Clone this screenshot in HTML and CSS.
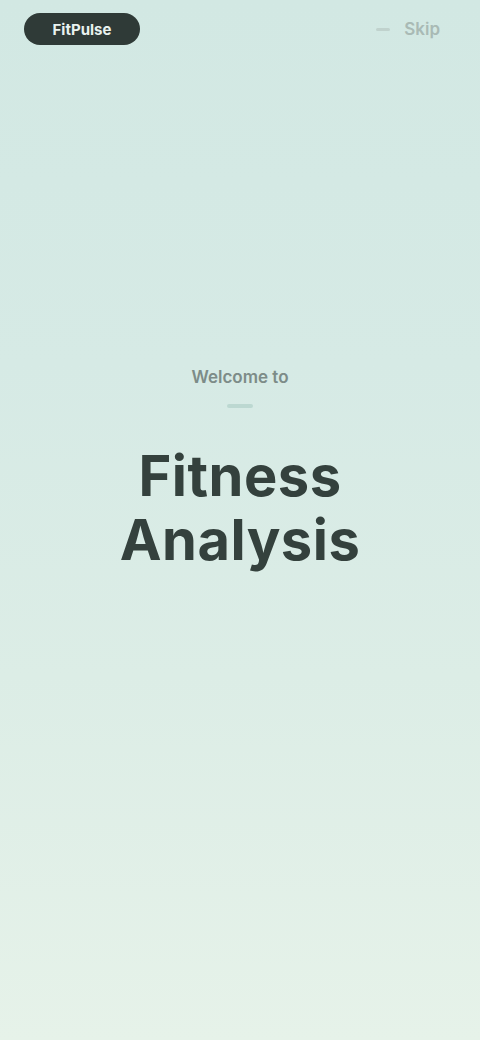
FILE: index.html
```html
<!DOCTYPE html>
<html lang="en">
<head>
<meta charset="utf-8">
<title>Fitness Analysis</title>
<link rel="stylesheet" href="styles.css">
</head>
<body>
<div class="screen">
  <header class="topbar">
    <div class="brand-pill">FitPulse</div>
    <div class="skip"><span class="skip-dot"></span>Skip</div>
  </header>
  <main class="hero">
    <div class="step">Welcome to</div>
    <div class="step-bar"></div>
    <h1 class="title">Fitness<br>Analysis</h1>
  </main>
</div>
</body>
</html>
```
FILE: styles.css
```css
* { box-sizing: border-box; }
html, body { margin: 0; padding: 0; }
body {
  font-family: Inter, "Noto Sans", "Liberation Sans", sans-serif;
  width: 480px;
  height: 1040px;
  overflow: hidden;
}
.screen {
  width: 480px;
  height: 1040px;
  background: linear-gradient(180deg, #d2e8e3 0%, #d6eae5 35%, #dcede6 65%, #e6f2e9 100%);
  display: flex;
  flex-direction: column;
}
.topbar {
  display: flex;
  justify-content: space-between;
  align-items: center;
  padding: 12px 40px 0 24px;
  height: 46px;
}
.brand-pill {
  width: 116px;
  height: 32px;
  border-radius: 16px;
  background: #2f3a37;
  color: #e9f2ef;
  font-size: 15px;
  font-weight: 700;
  display: flex;
  align-items: center;
  justify-content: center;
}
.skip {
  display: flex;
  align-items: center;
  gap: 14px;
  color: #a9bab5;
  font-size: 17px;
  font-weight: 600;
}
.skip-dot {
  width: 14px;
  height: 3px;
  border-radius: 2px;
  background: #c0d2cd;
}
.hero {
  display: flex;
  flex-direction: column;
  align-items: center;
  padding-top: 316px;
}
.step {
  font-size: 17px;
  font-weight: 600;
  color: #7d8c88;
  line-height: 30px;
}
.step-bar {
  width: 26px;
  height: 4px;
  border-radius: 2px;
  background: #bcd8d1;
  margin-top: 12px;
}
.title {
  margin: 36px 0 0;
  font-size: 56px;
  font-weight: 700;
  line-height: 64px;
  color: #34413d;
  text-align: center;
  letter-spacing: 0.5px;
}
```
